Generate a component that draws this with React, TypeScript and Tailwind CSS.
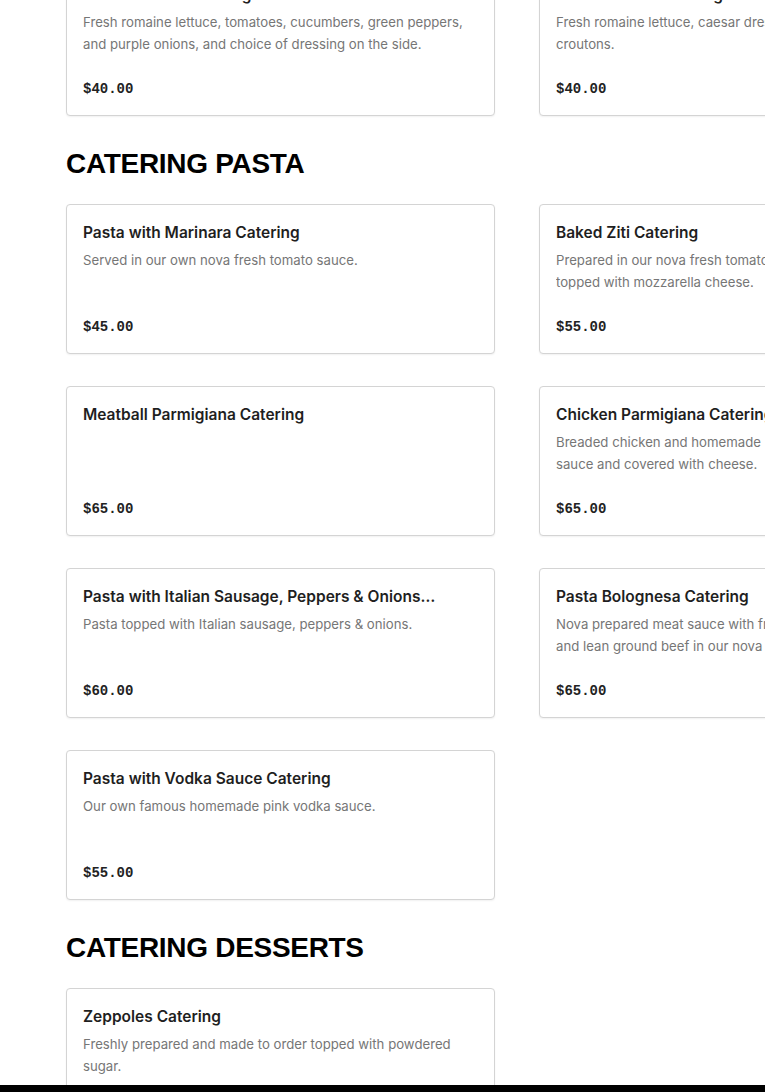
type Item = { name: string; desc?: string; price: string };

const salads: Item[] = [
    { name: 'Garden Salad Catering', desc: 'Fresh romaine lettuce, tomatoes, cucumbers, green peppers, and purple onions, and choice of dressing on the side.', price: '$40.00' },
    { name: 'Caesar Salad Catering', desc: 'Fresh romaine lettuce, caesar dressing, parmesan, and croutons.', price: '$40.00' },
];

const pasta: Item[] = [
    { name: 'Pasta with Marinara Catering', desc: 'Served in our own nova fresh tomato sauce.', price: '$45.00' },
    { name: 'Baked Ziti Catering', desc: 'Prepared in our nova fresh tomato sauce with ricotta cheese, topped with mozzarella cheese.', price: '$55.00' },
    { name: 'Meatball Parmigiana Catering', price: '$65.00' },
    { name: 'Chicken Parmigiana Catering', desc: 'Breaded chicken and homemade mozzarella in our own tomato sauce and covered with cheese.', price: '$65.00' },
    { name: 'Pasta with Italian Sausage, Peppers & Onions Catering', desc: 'Pasta topped with Italian sausage, peppers & onions.', price: '$60.00' },
    { name: 'Pasta Bolognesa Catering', desc: 'Nova prepared meat sauce with fresh tomatoes, garlic, basil and lean ground beef in our nova kitchen.', price: '$65.00' },
    { name: 'Pasta with Vodka Sauce Catering', desc: 'Our own famous homemade pink vodka sauce.', price: '$55.00' },
];

const desserts: Item[] = [
    { name: 'Zeppoles Catering', desc: 'Freshly prepared and made to order topped with powdered sugar.', price: '$30.00' },
];

function MenuCard({ item }: { item: Item }) {
    return (
        <div className="flex h-[150px] flex-col rounded-[4px] border border-[#d4d4d4] bg-white p-4 shadow-[0_1px_2px_rgba(0,0,0,0.06)]">
            <h3 className="line-clamp-1 text-[15.5px] leading-6 font-semibold text-[#1f1f1f]">{item.name}</h3>
            {item.desc && <p className="mt-1 line-clamp-2 text-[13.2px] leading-[22px] text-[#767676]">{item.desc}</p>}
            <div className="mt-auto font-['Liberation_Mono',monospace] text-[14px] leading-5 font-bold text-[#222]">{item.price}</div>
        </div>
    );
}

function Section({ title, items }: { title?: string; items: Item[] }) {
    return (
        <section>
            {title && (
                <h2 className="mt-[30px] mb-[22px] font-['Liberation_Sans',Arial,sans-serif] text-[28px] leading-9 font-black tracking-[-0.3px] text-black">
                    {title}
                </h2>
            )}
            <div className="grid grid-cols-[429px_429px] gap-x-[44px] gap-y-8">
                {items.map((item) => (
                    <MenuCard key={item.name} item={item} />
                ))}
            </div>
        </section>
    );
}

export default function App() {
    return (
        <div className="min-h-screen w-full overflow-hidden bg-white font-['Inter',sans-serif]">
            <div className="-mt-[34px] pl-[66px]">
                <Section items={salads} />
                <Section title="CATERING PASTA" items={pasta} />
                <Section title="CATERING DESSERTS" items={desserts} />
            </div>
            <div className="fixed right-0 bottom-0 left-0 h-[7px] bg-black" />
        </div>
    );
}
